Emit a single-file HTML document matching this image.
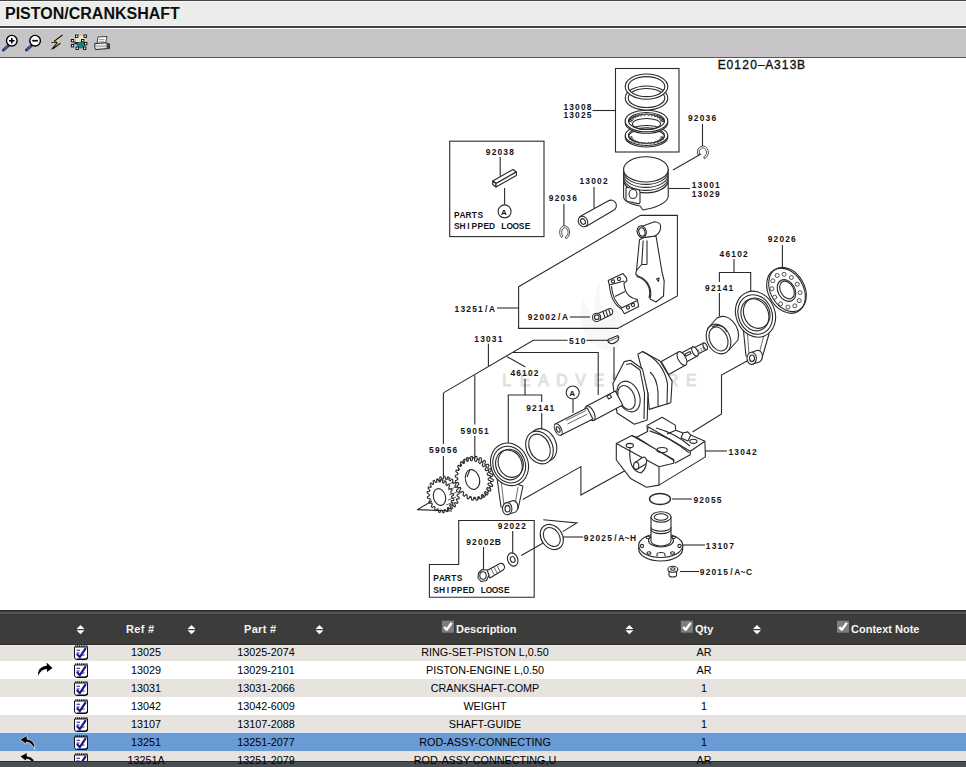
<!DOCTYPE html>
<html><head><meta charset="utf-8">
<style>
*{margin:0;padding:0;box-sizing:border-box}
html,body{width:966px;height:767px;overflow:hidden;background:#fff;font-family:"Liberation Sans",sans-serif}
.abs{position:absolute;left:0;width:966px}
#title{position:absolute;left:5px;top:5px;font-size:16px;font-weight:bold;color:#0d0d0d;white-space:nowrap}
#diag{position:absolute;left:0;top:58px}
.ht{position:absolute;top:623px;color:#f6f6f6;font-weight:bold;font-size:11px;white-space:nowrap}
.c{position:absolute;white-space:nowrap;transform:translateX(-50%);font-size:10.8px;color:#000}
.ico{position:absolute}
</style></head><body>
<!-- header -->
<div class="abs" style="top:0;height:1px;background:#424446"></div>
<div class="abs" style="top:1px;height:1px;background:#f6f6f6"></div>
<div class="abs" style="top:2px;height:23px;background:#ecedeb"></div>
<div class="abs" style="top:25px;height:1px;background:#f3f6f8"></div>
<div class="abs" style="top:26px;height:2px;background:#3f4246"></div>
<div class="abs" style="top:28px;height:1px;background:#ffffff"></div>
<div class="abs" style="top:29px;height:28px;background:#c6c4c7"></div>
<div class="abs" style="top:57px;height:1px;background:#5a585c"></div>
<div id="title">PISTON/CRANKSHAFT</div>
<svg class="ico" style="left:0;top:29px" width="120" height="28" viewBox="0 29 120 28">
 <!-- zoom in -->
 <path d="M3.5,50 L8.5,45.5" stroke="#16305e" stroke-width="3" stroke-linecap="round"/>
 <path d="M4,49.5 L7.5,46.3" stroke="#5b8fcf" stroke-width="1" stroke-linecap="round"/>
 <circle cx="11.8" cy="40.7" r="5.3" fill="#fff" stroke="#000" stroke-width="1.4"/>
 <path d="M9,40.7 H14.6 M11.8,37.9 V43.5" stroke="#000" stroke-width="1.6"/>
 <!-- zoom out -->
 <path d="M26.5,50 L31.5,45.5" stroke="#16305e" stroke-width="3" stroke-linecap="round"/>
 <path d="M27,49.5 L30.5,46.3" stroke="#5b8fcf" stroke-width="1" stroke-linecap="round"/>
 <circle cx="35.1" cy="40.7" r="5.3" fill="#fff" stroke="#000" stroke-width="1.4"/>
 <path d="M32.3,40.7 H37.9" stroke="#000" stroke-width="1.7"/>
 <!-- lightning -->
 <path d="M62.5,35 L51.5,42.5 L56.5,42 L51.5,49.5 L61.5,42 L57,42.5 Z" fill="#f3f09a" stroke="none"/>
 <path d="M62.5,35 L54,41.5 M51.5,42.5 L57,42 M57.5,42.3 L51.5,49.5 M60.5,43 L53,48.8" stroke="#111" stroke-width="1.1" fill="none"/>
 <!-- select -->
 <path d="M73,43 L80,39 L79,46 Z" fill="#1c2f6a"/>
 <rect x="76" y="36" width="9" height="6" fill="#f1e5b5"/>
 <circle cx="81" cy="45" r="3.6" fill="#13837e"/>
 <g fill="#fff" stroke="#000" stroke-width="0.9">
  <rect x="75.5" y="35" width="2.4" height="2.4"/><rect x="84" y="35" width="2.4" height="2.4"/>
  <rect x="71.3" y="39.5" width="2.4" height="2.4"/><rect x="81.5" y="39.5" width="2.4" height="2.4"/>
  <rect x="71.3" y="44.5" width="2.4" height="2.4"/><rect x="84.5" y="42.5" width="2.4" height="2.4"/>
  <rect x="76" y="47" width="2.4" height="2.4"/><rect x="83.5" y="47" width="2.4" height="2.4"/>
 </g>
 <!-- printer -->
 <path d="M98,37 L107,36.5 L105.5,43 L97,43.5 Z" fill="#fff" stroke="#333" stroke-width="0.9"/>
 <path d="M99,39.5 H104.5 M98.8,41.3 H104" stroke="#777" stroke-width="0.7"/>
 <path d="M94.8,43.5 L106,42.8 L109.5,44 L109.5,48.5 L95.5,49.5 L94.8,47.5 Z" fill="#e6e6e6" stroke="#222" stroke-width="1"/>
 <path d="M106.5,43 L109.5,44 L109.5,48.5 L106.5,49 Z" fill="#444"/>
 <path d="M95.5,46.2 H106" stroke="#888" stroke-width="0.8"/>
</svg>

<svg id="diag" width="966" height="552" viewBox="0 58 966 552"><g font-family="Liberation Sans, sans-serif" font-size="15.6" fill="#e0e0e0" stroke="#e0e0e0" stroke-width="0.9" text-anchor="middle">
<text x="506.6 525.1 543.5 562.0 580.4 598.9 617.3 635.8 654.2 672.6 691.1" y="386.2">LEADVENTURE</text>
</g>
<path d="M600,282 Q590,300 597,318 Q585,310 584,298 Q576,318 586,336 Q596,350 612,352 Q626,340 622,320 Q618,306 610,300 Q614,314 606,322 Q598,305 600,282 Z" fill="#f7f7f7"/>
<g fill="none" stroke="#2a2a2a" stroke-width="1.1">
<rect x="615.5" y="68.5" width="63.5" height="83.5"/>
<line x1="592.5" y1="110.5" x2="615.5" y2="110.5"/>
<path fill="#fff" fill-rule="evenodd" d="M625.2,137.0 a21.3,10.0 0 1 0 42.6,0 a21.3,10.0 0 1 0 -42.6,0 Z M628.5,137.0 a18.0,7.8 0 1 0 36.0,0 a18.0,7.8 0 1 0 -36.0,0 Z"/>
<path fill="#fff" fill-rule="evenodd" d="M625.2,135.5 a21.3,10.0 0 1 0 42.6,0 a21.3,10.0 0 1 0 -42.6,0 Z M628.5,135.5 a18.0,7.8 0 1 0 36.0,0 a18.0,7.8 0 1 0 -36.0,0 Z"/>
<polyline fill="none" stroke-width="0.8" points="660.8,136.5 664.5,137.4 660.3,138.0 663.5,139.3 659.1,139.4 661.4,141.0 657.2,140.6 658.5,142.4 654.6,141.6 654.9,143.4 651.6,142.3 650.8,144.1 648.2,142.6 646.5,144.3 644.8,142.6 642.2,144.1 641.4,142.3 638.1,143.4 638.4,141.6 634.5,142.4 635.8,140.6 631.6,141.0 633.9,139.4 629.5,139.3 632.7,138.0 628.5,137.4 632.2,136.5"/>
<path fill="#fff" fill-rule="evenodd" d="M625.2,122.5 a21.3,10.8 0 1 0 42.6,0 a21.3,10.8 0 1 0 -42.6,0 Z M628.5,122.5 a18.0,8.5 0 1 0 36.0,0 a18.0,8.5 0 1 0 -36.0,0 Z"/>
<path fill="#fff" fill-rule="evenodd" d="M625.2,121.0 a21.3,10.8 0 1 0 42.6,0 a21.3,10.8 0 1 0 -42.6,0 Z M628.5,121.0 a18.0,8.5 0 1 0 36.0,0 a18.0,8.5 0 1 0 -36.0,0 Z"/>
<polyline fill="none" stroke-width="0.8" points="632.2,122.0 628.5,121.0 632.7,120.5 629.5,119.1 633.9,119.1 631.6,117.4 635.8,117.8 634.5,116.0 638.4,116.8 638.1,114.9 641.4,116.1 642.2,114.2 644.8,115.7 646.5,113.9 648.2,115.7 650.8,114.2 651.6,116.1 654.9,114.9 654.6,116.8 658.5,116.0 657.2,117.8 661.4,117.4 659.1,119.1 663.5,119.1 660.3,120.5 664.5,121.0 660.8,122.0"/>
<ellipse cx="646.5" cy="124" rx="14" ry="5.5"/>
<path fill="#fff" fill-rule="evenodd" d="M625.2,98.0 a21.3,12.0 0 1 0 42.6,0 a21.3,12.0 0 1 0 -42.6,0 Z M628.2,98.0 a18.3,9.5 0 1 0 36.6,0 a18.3,9.5 0 1 0 -36.6,0 Z"/>
<path fill="#fff" fill-rule="evenodd" d="M625.2,86.6 a21.3,12.6 0 1 0 42.6,0 a21.3,12.6 0 1 0 -42.6,0 Z M628.2,86.6 a18.3,10.0 0 1 0 36.6,0 a18.3,10.0 0 1 0 -36.6,0 Z"/>
</g>
<g fill="none" stroke="#2a2a2a" stroke-width="1.1">
<line x1="702.5" y1="124" x2="702.5" y2="146"/>
<line x1="673" y1="170" x2="701" y2="154"/>
<line x1="500.2" y1="157" x2="500.2" y2="177"/>
<line x1="504.6" y1="188" x2="504.6" y2="204.5"/>
<circle cx="504.6" cy="211.4" r="6.5"/>
<rect x="449.7" y="141.2" width="94.3" height="95.4"/>
<line x1="563.9" y1="204" x2="563.9" y2="227"/>
<line x1="594" y1="187" x2="594" y2="208"/>
<line x1="668" y1="188.5" x2="690" y2="188.5"/>
<polygon points="518.6,286.7 640.5,215.4 677.4,215.4 677.4,296 617.7,328.4 518.6,328.4"/>
<line x1="497" y1="308" x2="518.6" y2="308"/>
<line x1="570" y1="317" x2="590" y2="317"/>
<line x1="782.4" y1="245" x2="782.4" y2="267"/>
<line x1="734" y1="259" x2="734" y2="272.5"/>
<polyline points="719.4,282 719.4,272.5 750.7,272.5 750.7,291"/>
<line x1="719.4" y1="293" x2="719.4" y2="316"/>
<polyline points="747,361 721.5,375 721.5,414 692.5,432"/>
<polyline points="443.4,392.9 533.3,340.3 567.7,340.3"/>
<line x1="586.4" y1="340.3" x2="608" y2="340.3"/>
<line x1="488.4" y1="343.7" x2="488.4" y2="366.7"/>
<polyline points="474.8,375.2 474.8,424.5"/>
<line x1="474.8" y1="436" x2="474.8" y2="459"/>
<line x1="443.4" y1="392.9" x2="443.4" y2="444"/>
<line x1="443.4" y1="456" x2="443.4" y2="476"/>
<line x1="506.7" y1="356.5" x2="525.4" y2="366.9"/>
<polyline points="512.6,352.5 598.2,352.5 598.2,395"/>
<line x1="525" y1="379" x2="525" y2="395"/>
<polyline points="508.3,442.7 508.3,395 541.7,395 541.7,402"/>
<line x1="541.7" y1="413" x2="541.7" y2="430"/>
<line x1="614" y1="347" x2="614" y2="380"/>
<circle cx="572.7" cy="392.5" r="6.5"/>
<line x1="573" y1="399" x2="573" y2="413"/>
<polyline points="522.8,499.6 580.9,466.6 580.9,495 634.4,465.4"/>
<polyline points="543.3,519.7 576.9,523 562.7,531.6"/>
<line x1="521.3" y1="555.4" x2="552.3" y2="537.8"/>
<line x1="562" y1="537" x2="583" y2="537"/>
<line x1="705" y1="451" x2="727" y2="451"/>
<line x1="672" y1="499" x2="692" y2="499"/>
<line x1="683" y1="545" x2="705" y2="545"/>
<line x1="680" y1="571.5" x2="699" y2="571.5"/>
<polygon points="429.4,564.5 429.4,597.3 534.2,597.3 534.2,520.5 458.7,520.5 458.7,564.5"/>
<line x1="512.7" y1="531" x2="512.7" y2="553"/>
<line x1="483.5" y1="547" x2="483.5" y2="570"/>
</g>
<g fill="#fff" stroke="#2a2a2a" stroke-width="1.1" stroke-linejoin="round">
<!-- piston -->
<path d="M623.6,169.5 L623.6,197 Q624,203 640,206 L643,210 L652,208 Q668,203 668.2,196 L668.2,169.5 Z"/>
<ellipse cx="645.9" cy="169.4" rx="22.3" ry="12.6"/>
<path d="M623.8,173 A22.2,12.6 0 0 0 668,173" fill="none"/>
<path d="M623.8,176 A22.2,12.6 0 0 0 668,176" fill="none"/>
<path d="M623.8,179 A22.2,12.6 0 0 0 668,179" fill="none"/>
<path d="M624,182 A22.2,12.6 0 0 0 668,182" fill="none"/>
<rect x="626" y="187" width="14" height="14" rx="2" transform="skewY(12) translate(0,-133)"/>
<ellipse cx="633" cy="194" rx="4" ry="4.5" fill="none"/>
<!-- circlips -->
<path d="M697.7,154.6 A5.5,6.5 0 1 1 704.3,158.7 L703.8,156.7 A3.5,4.5 0 1 0 699.6,153.9 Z" stroke-width="0.8"/>
<path d="M561.5,237.5 A5,6.6 0 1 1 566,238.7 L565.5,236.8 A3.2,4.6 0 1 0 562.8,235.8 Z" stroke-width="0.8"/>
<!-- pin 13002 -->
<path d="M580,216.5 L608,201 A5.2,5.2 0 0 1 614,210 L586,226.5 Z"/>
<ellipse cx="583" cy="221.5" rx="4.5" ry="5.5" transform="rotate(-30 583 221.5)"/>
<ellipse cx="583" cy="221.5" rx="2.2" ry="3" transform="rotate(-30 583 221.5)"/>
<!-- key bar 92038 -->
<polygon points="492.7,181 513,169.5 516.4,172 496,183.5"/>
<polygon points="492.7,181 496,183.5 496,187 492.7,184.5"/>
<polygon points="496,183.5 516.4,172 516.4,175.5 496,187"/>
<!-- con rod upper -->
<path d="M639.5,239.7 L636.5,270.5 L635.7,274.2 L638,276 A18.5,18.5 0 0 1 650,299 L656,302 L663.5,296 L664.2,281 L662,272 L656,236 L644,237.5 Z"/>
<path d="M643.2,240.5 L641.7,264.5 M647,240.5 L647,264.5 M636.5,270.5 L641.7,264.5 L647,264.5" fill="none"/>
<path d="M636.5,276.5 A17,17 0 0 1 649,298" fill="none"/>
<path d="M656.5,279 L659,278 L658.5,281.5 Z" fill="none"/>
<path d="M640.2,227 L654.5,221.7 Q662,222 660.5,229.2 Q659,234.5 654.5,236 L644,237.5 Z"/>
<ellipse cx="641.7" cy="231.8" rx="4.5" ry="6" transform="rotate(-15 641.7 231.8)"/>
<ellipse cx="641.9" cy="232" rx="3" ry="4.3" transform="rotate(-15 641.9 232)" fill="none"/>
<!-- cap -->
<path d="M608.2,280.4 L623,273.6 L626.5,277.9 L626.9,280.8 L624,283 Q624.5,297 637.3,299.4 L638.7,306.6 L624.4,313.8 L621.5,309 Q611,303 609.3,285 Z"/>
<path d="M609.3,285 L624,281 M611.5,286 Q612.5,301 622,308 M621.5,308 L637.3,300.5 M615,296.6 L625,291.5" fill="none"/>
<circle cx="613" cy="281.5" r="1.6" fill="none"/><circle cx="619" cy="279" r="1.6" fill="none"/>
<circle cx="628" cy="307.5" r="1.6" fill="none"/><circle cx="633" cy="305" r="1.6" fill="none"/>
<!-- bolt 92002/A -->
<path d="M598,313.5 L609,308.8 A2.8,3.3 0 0 1 612,314.2 L600.5,320 Z"/>
<path d="M603,311.5 L605,317.5 M605.8,310.3 L607.8,316.3 M608.6,309.1 L610.5,315" fill="none"/>
<circle cx="596.6" cy="317.4" r="4.1"/>
<circle cx="596.8" cy="317.2" r="2.3" fill="none"/>
<!-- key 510 -->
<path d="M608.2,339.6 L617.9,335.6 Q620,339 616.6,341.5 Q613,344.5 610,343.2 Q607.3,341.8 608.2,339.6 Z"/>
<path d="M608.8,341.3 L618.6,337.2" fill="none" stroke-width="0.8"/>
<!-- thrust washer 92026 -->
<ellipse cx="786" cy="290.7" rx="17.5" ry="24" transform="rotate(-30 786 290.7)"/>
<ellipse cx="787.5" cy="289.5" rx="17" ry="23.5" transform="rotate(-30 787.5 289.5)" fill="none"/>
<ellipse cx="786.5" cy="290.5" rx="8.5" ry="11.5" transform="rotate(-30 786.5 290.5)"/>
<ellipse cx="787" cy="290" rx="6.5" ry="9.5" transform="rotate(-30 787 290)" fill="none"/>
<circle cx="797.3" cy="284.2" r="2" stroke-width="0.8"/>
<circle cx="800.1" cy="292.6" r="2" stroke-width="0.8"/>
<circle cx="799.2" cy="300.6" r="2" stroke-width="0.8"/>
<circle cx="794.8" cy="305.9" r="2" stroke-width="0.8"/>
<circle cx="787.9" cy="307.1" r="2" stroke-width="0.8"/>
<circle cx="780.6" cy="303.9" r="2" stroke-width="0.8"/>
<circle cx="774.7" cy="297.2" r="2" stroke-width="0.8"/>
<circle cx="771.9" cy="288.8" r="2" stroke-width="0.8"/>
<circle cx="772.8" cy="280.8" r="2" stroke-width="0.8"/>
<circle cx="777.2" cy="275.5" r="2" stroke-width="0.8"/>
<circle cx="784.1" cy="274.3" r="2" stroke-width="0.8"/>
<circle cx="791.4" cy="277.5" r="2" stroke-width="0.8"/>
<!-- bearing right 92141 -->
<path d="M717,318 A12.5,16.5 -25 0 1 738,340 L729,350 A12.5,16.5 -25 0 1 708,328 Z"/>
<ellipse cx="718.5" cy="339" rx="11.5" ry="15.5" transform="rotate(-25 718.5 339)"/>
<ellipse cx="718.5" cy="339" rx="8.8" ry="12.5" transform="rotate(-25 718.5 339)" fill="none"/>
<path d="M712,327 Q722,322 727,332" fill="none"/>
<!-- con rod right -->
<polygon points="743.0,326.0 746.0,356.0 762.0,358.0 769.0,334.0"/>
<path d="M747.0,328.0 L749.0,354.0 M764.0,335.0 L759.0,354.0" fill="none" stroke-width="0.7"/>
<ellipse cx="755.5" cy="314.2" rx="19.5" ry="23.5" transform="rotate(-22.0 755.5 314.2)"/>
<ellipse cx="755.2" cy="314.5" rx="16.8" ry="20.2" transform="rotate(-22.0 755.2 314.5)" fill="none"/>
<ellipse cx="754.9" cy="314.8" rx="13.6" ry="16.4" transform="rotate(-22.0 754.9 314.8)"/>
<ellipse cx="756.7" cy="313.2" rx="12.9" ry="15.5" transform="rotate(-22.0 756.7 313.2)" fill="none"/>
<path d="M751.7,352.2 L757.7,350.2 A4.7,6.1 0 0 1 757.7,362.4 L751.7,364.4 Z"/>
<ellipse cx="751.7" cy="358.3" rx="4.7" ry="6.1"/>
<ellipse cx="752.0" cy="358.3" rx="2.5" ry="3.3"/>

</g>
<g fill="#fff" stroke="#2a2a2a" stroke-width="1.1" stroke-linejoin="round">
<!-- crankshaft right shaft -->
<polygon points="696.7,354.7 706.9,349.4 703.5,343.0 693.3,348.3"/>
<ellipse cx="705.2" cy="346.2" rx="1.8" ry="3.6" transform="rotate(-27.5 705.2 346.2)"/>
<polygon points="684.4,362.9 697.4,355.9 692.6,347.1 679.6,354.1"/>
<ellipse cx="695.0" cy="351.5" rx="2.5" ry="5.0" transform="rotate(-28.3 695.0 351.5)"/>
<path d="M698,349.5 l1.5,3 M700.5,348.2 l1.5,3 M702.8,347 l1.5,3" fill="none" stroke-width="0.7"/>
<path d="M685,354 L690,351.5 L691,353.5 L686,356 Z" fill="none"/>
<polygon points="668.7,374.5 685.7,365.0 678.3,352.0 661.3,361.5"/>
<ellipse cx="682.0" cy="358.5" rx="3.8" ry="7.5" transform="rotate(-29.2 682.0 358.5)"/>
<!-- rear web -->
<path d="M637.8,354.2 L642.5,351.5 L660,361 L672.1,381.1 L670.8,402.7 L649.2,409.4 L647.9,393.3 Z"/>
<path d="M642.5,351.5 Q664,362 667.5,384 L667,404.5" fill="none"/>
<path d="M650,372 Q657,378 658,392 L658,406" fill="none"/>
<!-- front web -->
<path d="M612.9,383.8 L624.3,361.6 L630.4,360.3 L642.5,369 L647.9,393.3 L647.2,420 L634.4,424.2 L617,413 Z"/>
<path d="M626,364.5 L631,363.5 L640,370 L644.5,393 L644,419" fill="none"/>
<!-- journal boss -->
<ellipse cx="628.5" cy="396.5" rx="10.8" ry="16" transform="rotate(-22 628.5 396.5)"/>
<ellipse cx="626.5" cy="397.5" rx="8" ry="12.5" transform="rotate(-22 626.5 397.5)" fill="none"/>
<polygon points="615.3,390.9 586.3,406.2 593.7,420.4 622.7,405.1"/>
<ellipse cx="590.0" cy="413.3" rx="4.0" ry="8.0" transform="rotate(152.2 590.0 413.3)"/>
<path d="M607,396 L610,394.5 L611.5,397.5 L608.5,399 Z" fill="none"/>
<polygon points="587.1,407.7 555.3,423.9 561.1,435.1 592.9,418.9"/>
<ellipse cx="558.2" cy="429.5" rx="3.1" ry="6.3" transform="rotate(153.0 558.2 429.5)"/>
<ellipse cx="558.2" cy="429.5" rx="1.5" ry="3.0" transform="rotate(153.0 558.2 429.5)" fill="none"/>
<path d="M566,420.5 L586,410.5 M567.5,424 L587.5,414" fill="none" stroke-width="0.7"/>

<!-- block 13042 -->
<path d="M616.3,443.4 L631.9,435.5 L636.6,437.3 L647.5,431.4 L647,425.6 L662.1,417.3 L675.2,425.1 L675.7,430.3 L683,433 L687.7,431.9 L690.8,435 L704.9,441.3 L705.4,456.9 L659,485.1 L646.5,487.2 L630.9,478.8 L616.3,460 Z"/>
<path d="M616.3,443.4 L659,466.8 L659,485.1 M631.9,435.5 L673.6,459.5 L673.6,463.2 L659,466.8 M648.1,426.7 L690.3,451.2 L704.9,441.3 M690.3,451.2 L690.3,454.8 L674.7,463.2 M636.6,437.3 L674.7,461.1 M647.5,431.4 L648.1,426.7 M675.7,430.3 L667,434 M683,433 L681,438 L688,441 L690.8,435" fill="none"/>
<path d="M649.6,430.9 Q670,437 689.2,452.8 M656,428 Q675,433 690,446" fill="none"/>
<ellipse cx="629.8" cy="445.5" rx="3.6" ry="2.1"/>
<ellipse cx="693.4" cy="441.3" rx="3.6" ry="2.1"/>
<ellipse cx="662.1" cy="450.1" rx="5.2" ry="2.6" fill="none"/>
<path d="M630,448 Q628,470 641,473 Q647,468 646,462" fill="none"/>
<path d="M635,462.5 L642.5,457.5 A2.6,3.6 0 0 1 645,464.5 L637.5,469 Z"/>
<ellipse cx="636.2" cy="465.8" rx="2.6" ry="3.6"/>

<!-- o-ring -->
<ellipse cx="660" cy="499" rx="10.5" ry="5.5" fill="none" stroke-width="1.4"/>
<!-- shaft guide 13107 -->
<path d="M638.7,545.5 L638.7,549 A22,12 0 0 0 682.7,549 L682.7,545.5 Z"/>
<ellipse cx="660.7" cy="545.5" rx="22" ry="12"/>
<circle cx="642" cy="546" r="1.6" fill="none"/><circle cx="679.5" cy="546" r="1.6" fill="none"/>
<ellipse cx="649" cy="553" rx="2" ry="1.3" fill="none"/><ellipse cx="672.5" cy="553" rx="2" ry="1.3" fill="none"/>
<ellipse cx="648" cy="537.5" rx="1.8" ry="1.2" fill="none"/><ellipse cx="673.5" cy="537.5" rx="1.8" ry="1.2" fill="none"/>
<path d="M657,556.5 L657,554.5 A4,2 0 0 1 665,554.5 L665,556.5" fill="none"/>
<ellipse cx="661" cy="540.5" rx="12.5" ry="6.5"/>
<path d="M651,517 L651,541 A10,5 0 0 0 671,541 L671,517 Z"/>
<ellipse cx="661" cy="517" rx="10" ry="5.2"/>
<ellipse cx="661" cy="517" rx="6.8" ry="3.3"/>
<path d="M651,527.2 A10,4 0 0 0 671,527.2 M651,529.6 A10,4 0 0 0 671,529.6" fill="none"/>
<!-- plug 92015 -->
<path d="M669,570 L669,575 A3.8,2 0 0 0 676.6,575 L676.6,570 Z"/>
<ellipse cx="672.8" cy="569.3" rx="5" ry="3"/>
<ellipse cx="672.8" cy="569" rx="2.2" ry="1.3" fill="none"/>
<!-- bearing left 92141 -->
<ellipse cx="543" cy="445" rx="13" ry="17" transform="rotate(-25 543 445)"/>
<ellipse cx="539.5" cy="447.5" rx="13" ry="17" transform="rotate(-25 539.5 447.5)"/>
<ellipse cx="539.5" cy="447.5" rx="10" ry="14" transform="rotate(-25 539.5 447.5)"/>
<!-- con rod left -->
<polygon points="497.0,478.0 501.0,507.0 518.0,509.0 523.0,486.0"/>
<path d="M501.0,480.0 L504.0,505.0 M518.0,487.0 L515.0,505.0" fill="none" stroke-width="0.7"/>
<ellipse cx="509.5" cy="464.3" rx="18.6" ry="21.7" transform="rotate(-22.0 509.5 464.3)"/>
<ellipse cx="509.2" cy="464.6" rx="16.0" ry="18.7" transform="rotate(-22.0 509.2 464.6)" fill="none"/>
<ellipse cx="508.9" cy="464.9" rx="13.0" ry="15.2" transform="rotate(-22.0 508.9 464.9)"/>
<ellipse cx="510.7" cy="463.3" rx="12.3" ry="14.3" transform="rotate(-22.0 510.7 463.3)" fill="none"/>
<path d="M507.2,502.6 L513.2,500.6 A4.7,6.1 0 0 1 513.2,512.8 L507.2,514.8 Z"/>
<ellipse cx="507.2" cy="508.7" rx="4.7" ry="6.1"/>
<ellipse cx="507.5" cy="508.7" rx="2.5" ry="3.3"/>

<!-- gear 59051 -->
<polygon points="490.0,473.6 492.7,474.1 493.0,475.7 490.7,476.9 490.8,478.4 493.3,479.6 493.2,481.3 490.7,481.7 490.5,483.1 492.7,485.0 492.3,486.5 489.7,486.1 489.2,487.4 490.9,489.9 490.2,491.2 487.7,490.0 486.9,491.0 488.1,493.9 487.1,495.0 484.9,493.0 483.9,493.7 484.5,496.9 483.2,497.5 481.4,495.0 480.3,495.4 480.2,498.5 478.8,498.7 477.6,495.8 476.4,495.8 475.6,498.7 474.2,498.4 473.6,495.3 472.4,494.9 471.0,497.4 469.6,496.7 469.7,493.6 468.6,492.9 466.7,494.8 465.5,493.7 466.2,490.8 465.3,489.8 463.0,491.0 462.0,489.6 463.4,487.1 462.7,485.9 460.1,486.2 459.5,484.7 461.4,482.8 461.0,481.4 458.3,480.9 458.0,479.3 460.3,478.1 460.2,476.6 457.7,475.4 457.8,473.7 460.3,473.3 460.5,471.9 458.3,470.0 458.7,468.5 461.3,468.9 461.8,467.6 460.1,465.1 460.8,463.8 463.3,465.0 464.1,464.0 462.9,461.1 463.9,460.0 466.1,462.0 467.1,461.3 466.5,458.1 467.8,457.5 469.6,460.0 470.7,459.6 470.8,456.5 472.2,456.3 473.4,459.2 474.6,459.2 475.4,456.3 476.8,456.6 477.4,459.7 478.6,460.1 480.0,457.6 481.4,458.3 481.3,461.4 482.4,462.1 484.3,460.2 485.5,461.3 484.8,464.2 485.7,465.2 488.0,464.0 489.0,465.4 487.6,467.9 488.3,469.1 490.9,468.8 491.5,470.3 489.6,472.2"/>
<polygon points="487.5,475.1 490.2,475.6 490.5,477.2 488.2,478.4 488.3,479.9 490.8,481.1 490.7,482.8 488.2,483.2 488.0,484.6 490.2,486.5 489.8,488.0 487.2,487.6 486.7,488.9 488.4,491.4 487.7,492.7 485.2,491.5 484.4,492.5 485.6,495.4 484.6,496.5 482.4,494.5 481.4,495.2 482.0,498.4 480.7,499.0 478.9,496.5 477.8,496.9 477.7,500.0 476.3,500.2 475.1,497.3 473.9,497.3 473.1,500.2 471.7,499.9 471.1,496.8 469.9,496.4 468.5,498.9 467.1,498.2 467.2,495.1 466.1,494.4 464.2,496.3 463.0,495.2 463.7,492.3 462.8,491.3 460.5,492.5 459.5,491.1 460.9,488.6 460.2,487.4 457.6,487.7 457.0,486.2 458.9,484.3 458.5,482.9 455.8,482.4 455.5,480.8 457.8,479.6 457.7,478.1 455.2,476.9 455.3,475.2 457.8,474.8 458.0,473.4 455.8,471.5 456.2,470.0 458.8,470.4 459.3,469.1 457.6,466.6 458.3,465.3 460.8,466.5 461.6,465.5 460.4,462.6 461.4,461.5 463.6,463.5 464.6,462.8 464.0,459.6 465.3,459.0 467.1,461.5 468.2,461.1 468.3,458.0 469.7,457.8 470.9,460.7 472.1,460.7 472.9,457.8 474.3,458.1 474.9,461.2 476.1,461.6 477.5,459.1 478.9,459.8 478.8,462.9 479.9,463.6 481.8,461.7 483.0,462.8 482.3,465.7 483.2,466.7 485.5,465.5 486.5,466.9 485.1,469.4 485.8,470.6 488.4,470.3 489.0,471.8 487.1,473.7"/>
<ellipse cx="472.5" cy="479.5" rx="7" ry="10" transform="rotate(-15 472.5 479.5)"/>
<path d="M467,477 L470,469.5" fill="none"/>
<!-- gear 59056 -->
<polygon points="456.8,491.5 459.1,492.2 459.3,493.8 457.2,494.6 457.1,495.9 459.2,497.5 459.0,499.0 456.7,498.8 456.4,500.0 458.0,502.2 457.4,503.5 455.2,502.5 454.6,503.4 455.6,506.1 454.7,507.0 452.8,505.2 451.9,505.8 452.3,508.7 451.2,509.2 449.7,506.8 448.7,507.0 448.4,509.7 447.1,509.7 446.3,507.0 445.2,506.8 444.2,509.2 443.0,508.7 442.8,505.8 441.8,505.2 440.2,507.0 439.1,506.1 439.6,503.4 438.8,502.5 436.8,503.5 435.9,502.2 437.1,500.0 436.5,498.8 434.3,498.9 433.7,497.4 435.5,495.8 435.2,494.5 432.9,493.8 432.7,492.2 434.8,491.4 434.9,490.1 432.8,488.5 433.0,487.0 435.3,487.2 435.6,486.0 434.0,483.8 434.6,482.5 436.8,483.5 437.4,482.6 436.4,479.9 437.3,479.0 439.2,480.8 440.1,480.2 439.7,477.3 440.8,476.8 442.3,479.2 443.3,479.0 443.6,476.3 444.9,476.3 445.7,479.0 446.8,479.2 447.8,476.8 449.0,477.3 449.2,480.2 450.2,480.8 451.8,479.0 452.9,479.9 452.4,482.6 453.2,483.5 455.2,482.5 456.1,483.8 454.9,486.0 455.5,487.2 457.7,487.1 458.3,488.6 456.5,490.2"/>
<polygon points="451.0,493.2 453.3,493.7 453.6,495.2 451.6,496.3 451.7,497.6 453.8,498.9 453.7,500.5 451.5,500.6 451.2,501.8 453.0,503.9 452.5,505.2 450.2,504.5 449.7,505.5 450.9,508.1 450.1,509.1 448.1,507.5 447.3,508.2 447.9,511.1 446.8,511.7 445.2,509.5 444.2,509.8 444.1,512.6 442.9,512.7 441.8,510.1 440.8,510.0 440.0,512.5 438.7,512.2 438.3,509.3 437.3,508.8 435.9,510.8 434.7,510.0 435.0,507.2 434.1,506.4 432.3,507.6 431.3,506.5 432.3,504.1 431.6,503.0 429.4,503.3 428.8,501.9 430.3,500.1 430.0,498.8 427.7,498.3 427.4,496.8 429.4,495.7 429.3,494.4 427.2,493.1 427.3,491.5 429.5,491.4 429.8,490.2 428.0,488.1 428.5,486.8 430.8,487.5 431.3,486.5 430.1,483.9 430.9,482.9 432.9,484.5 433.7,483.8 433.1,480.9 434.2,480.3 435.8,482.5 436.8,482.2 436.9,479.4 438.1,479.3 439.2,481.9 440.2,482.0 441.0,479.5 442.3,479.8 442.7,482.7 443.7,483.2 445.1,481.2 446.3,482.0 446.0,484.8 446.9,485.6 448.7,484.4 449.7,485.5 448.7,487.9 449.4,489.0 451.6,488.7 452.2,490.1 450.7,491.9"/>
<ellipse cx="439.5" cy="497" rx="6" ry="8.5" transform="rotate(-15 439.5 497)"/>
<path d="M443,481 L451,478 M446,485 L454,482 M448,490 L456,487 M449,495 L457,492 M448,500 L456,497 M446,505 L454,502" fill="none" stroke-width="0.7"/>

<polyline points="452,511 417.4,509.6 432,501" fill="none"/>
<!-- washer 92022 -->
<ellipse cx="512.7" cy="559.5" rx="5" ry="6.8" transform="rotate(-20 512.7 559.5)"/>
<ellipse cx="512.7" cy="559.5" rx="2.3" ry="3" transform="rotate(-20 512.7 559.5)"/>
<!-- bolt 92002B -->
<path d="M486,571 L499,564 A3.3,3.6 0 0 1 503,570 L490,578 Z"/>
<path d="M491,568.5 L494,574.5 M494,567 L497,573 M497,565.5 L500,571.3" fill="none" stroke-width="0.7"/>
<path d="M478.5,573 L482,569.5 L487,570 L489,575 L486.5,580.5 L481,581.5 L478,578 Z"/>
<ellipse cx="483" cy="575.5" rx="3.2" ry="3.8" fill="none"/>
<!-- washer 92025 -->
<ellipse cx="551.8" cy="537" rx="10.5" ry="13.5" transform="rotate(-35 551.8 537)"/>
<ellipse cx="551.8" cy="537" rx="7.5" ry="10.3" transform="rotate(-35 551.8 537)"/>
</g>
<g font-family="Liberation Sans, sans-serif" font-weight="bold" fill="#141414" text-anchor="middle">
<text x="565.72 571.57 577.42 583.27 589.12" y="109.6" font-size="8.4">13008</text>
<text x="565.72 571.57 577.42 583.27 589.12" y="117.9" font-size="8.4">13025</text>
<text x="690.32 696.17 702.02 707.87 713.72" y="121.3" font-size="8.4">92036</text>
<text x="488.12 493.97 499.82 505.67 511.52" y="154.7" font-size="8.4">92038</text>
<text x="581.82 587.67 593.52 599.37 605.22" y="184.1" font-size="8.4">13002</text>
<text x="551.12 556.97 562.82 568.67 574.52" y="200.9" font-size="8.4">92036</text>
<text x="694.02 699.87 705.72 711.57 717.42" y="187.9" font-size="8.4">13001</text>
<text x="694.02 699.87 705.72 711.57 717.42" y="196.6" font-size="8.4">13029</text>
<text x="456.72 462.62 468.52 474.42 480.32" y="217.7" font-size="8.4">PARTS</text>
<text x="456.72 462.62 468.52 474.42 480.32 486.22 492.12 503.92 509.82 515.72 521.62 527.52" y="229.4" font-size="8.4">SHIPPEDLOOSE</text>
<text x="770.02 775.87 781.72 787.57 793.42" y="241.9" font-size="8.4">92026</text>
<text x="721.92 727.77 733.62 739.47 745.32" y="256.8" font-size="8.4">46102</text>
<text x="707.42 713.27 719.12 724.97 730.82" y="291.4" font-size="8.4">92141</text>
<text x="456.92 462.77 468.62 474.47 480.32 486.17 492.02" y="311.8" font-size="8.4">13251/A</text>
<text x="530.02 535.87 541.72 547.57 553.42 559.27 565.12" y="320.0" font-size="8.4">92002/A</text>
<text x="476.62 482.47 488.32 494.17 500.02" y="341.5" font-size="8.4">13031</text>
<text x="571.42 577.27 583.12" y="344.1" font-size="8.4">510</text>
<text x="512.72 518.57 524.42 530.27 536.12" y="375.6" font-size="8.4">46102</text>
<text x="528.52 534.37 540.22 546.07 551.92" y="411.3" font-size="8.4">92141</text>
<text x="462.92 468.77 474.62 480.47 486.32" y="433.6" font-size="8.4">59051</text>
<text x="431.42 437.27 443.12 448.97 454.82" y="453.2" font-size="8.4">59056</text>
<text x="730.82 736.67 742.52 748.37 754.22" y="454.6" font-size="8.4">13042</text>
<text x="695.72 701.57 707.42 713.27 719.12" y="502.9" font-size="8.4">92055</text>
<text x="500.12 505.97 511.82 517.67 523.52" y="529.1" font-size="8.4">92022</text>
<text x="468.52 474.37 480.22 486.07 491.92 497.77" y="545.1" font-size="8.4">92002B</text>
<text x="708.12 713.97 719.82 725.67 731.52" y="548.7" font-size="8.4">13107</text>
<text x="586.12 591.97 597.82 603.67 609.52 615.37 621.22 627.07 632.92" y="540.5" font-size="8.4">92025/A~H</text>
<text x="436.02 441.92 447.82 453.72 459.62" y="580.9" font-size="8.4">PARTS</text>
<text x="436.02 441.92 447.82 453.72 459.62 465.52 471.42 483.22 489.12 495.02 500.92 506.82" y="593.1" font-size="8.4">SHIPPEDLOOSE</text>
<text x="702.12 707.97 713.82 719.67 725.52 731.37 737.22 743.07 748.92" y="575.4" font-size="8.4">92015/A~C</text>
<text x="504.00" y="214.6" font-size="8.0">A</text>
<text x="572.10" y="395.7" font-size="8.0">A</text>
</g>
<text x="721.80 729.72 737.64 745.56 753.48 761.40 769.32 777.24 785.16 793.08 801.00" y="69" font-family="Liberation Sans, sans-serif" font-size="12" fill="#111" stroke="#111" stroke-width="0.35" text-anchor="middle">E0120–A313B</text>
</svg>
<!-- table header -->
<div class="abs" style="top:610px;height:1px;background:#2a2b2e"></div>
<div class="abs" style="top:611px;height:1px;background:#3a3b3e"></div>
<div class="abs" style="top:612px;height:2px;background:#515256"></div>
<div class="abs" style="top:614px;height:1px;background:#38393b"></div>
<div class="abs" style="top:615px;height:29px;background:#3c3d3b"></div>
<div class="abs" style="top:644px;height:1px;background:#2f2f2c"></div>
<span class="ht" style="left:126px;letter-spacing:0.3px">Ref #</span>
<span class="ht" style="left:244px;letter-spacing:0.3px">Part #</span>
<span class="ht" style="left:456px">Description</span>
<span class="ht" style="left:695px">Qty</span>
<span class="ht" style="left:851px">Context Note</span>
<svg class="ico" style="left:0;top:615px" width="966" height="30" viewBox="0 615 966 30">
<path d="M76.5,629 L84.5,629 L80.5,625 Z M76.5,630.2 L84.5,630.2 L80.5,634.2 Z" fill="#fff"/>
<path d="M187.5,629 L195.5,629 L191.5,625 Z M187.5,630.2 L195.5,630.2 L191.5,634.2 Z" fill="#fff"/>
<path d="M315.5,629 L323.5,629 L319.5,625 Z M315.5,630.2 L323.5,630.2 L319.5,634.2 Z" fill="#fff"/>
<path d="M625.4,629 L633.4,629 L629.4,625 Z M625.4,630.2 L633.4,630.2 L629.4,634.2 Z" fill="#fff"/>
<path d="M753.0,629 L761.0,629 L757.0,625 Z M753.0,630.2 L761.0,630.2 L757.0,634.2 Z" fill="#fff"/>
<rect x="441.9" y="620.7" width="12" height="12" fill="#7d7d7d"/>
<path d="M444.2,627.0 L446.7,629.7 L451.7,622.9" stroke="#fff" stroke-width="2.4" fill="none" stroke-linejoin="round"/>
<rect x="680.9" y="620.7" width="12" height="12" fill="#7d7d7d"/>
<path d="M683.2,627.0 L685.7,629.7 L690.7,622.9" stroke="#fff" stroke-width="2.4" fill="none" stroke-linejoin="round"/>
<rect x="837.0" y="620.7" width="12" height="12" fill="#7d7d7d"/>
<path d="M839.3,627.0 L841.8,629.7 L846.8,622.9" stroke="#fff" stroke-width="2.4" fill="none" stroke-linejoin="round"/>
</svg>

<!-- rows -->
<div class="abs" style="top:645px;height:1px;background:#efede9"></div>
<div class="abs" style="top:646px;height:15px;background:#e7e4e0"></div>
<div class="abs" style="top:661px;height:18px;background:#ffffff"></div>
<div class="abs" style="top:679px;height:18px;background:#e7e4e0"></div>
<div class="abs" style="top:697px;height:18px;background:#ffffff"></div>
<div class="abs" style="top:715px;height:17px;background:#e7e4e0"></div>
<div class="abs" style="top:732px;height:1px;background:#dae8f9"></div>
<div class="abs" style="top:733px;height:18px;background:#6a9bd5"></div>
<div class="abs" style="top:751px;height:1px;background:#d6e4f1"></div>
<div class="abs" style="top:752px;height:9px;background:#e7e4e0"></div>
<div class="abs" style="top:761px;height:1px;background:#2d2e2c"></div>
<div class="abs" style="top:762px;height:5px;background:#4a4d52"></div>
<span class="c" style="left:146px;top:646.0px">13025</span>
<span class="c" style="left:266px;top:646.0px">13025-2074</span>
<span class="c" style="left:485px;top:646.0px">RING-SET-PISTON L,0.50</span>
<span class="c" style="left:704px;top:646.0px">AR</span>
<span class="c" style="left:146px;top:664.0px">13029</span>
<span class="c" style="left:266px;top:664.0px">13029-2101</span>
<span class="c" style="left:485px;top:664.0px">PISTON-ENGINE L,0.50</span>
<span class="c" style="left:704px;top:664.0px">AR</span>
<span class="c" style="left:146px;top:682.0px">13031</span>
<span class="c" style="left:266px;top:682.0px">13031-2066</span>
<span class="c" style="left:485px;top:682.0px">CRANKSHAFT-COMP</span>
<span class="c" style="left:704px;top:682.0px">1</span>
<span class="c" style="left:146px;top:700.0px">13042</span>
<span class="c" style="left:266px;top:700.0px">13042-6009</span>
<span class="c" style="left:485px;top:700.0px">WEIGHT</span>
<span class="c" style="left:704px;top:700.0px">1</span>
<span class="c" style="left:146px;top:718.0px">13107</span>
<span class="c" style="left:266px;top:718.0px">13107-2088</span>
<span class="c" style="left:485px;top:718.0px">SHAFT-GUIDE</span>
<span class="c" style="left:704px;top:718.0px">1</span>
<span class="c" style="left:146px;top:736.0px">13251</span>
<span class="c" style="left:266px;top:736.0px">13251-2077</span>
<span class="c" style="left:485px;top:736.0px">ROD-ASSY-CONNECTING</span>
<span class="c" style="left:704px;top:736.0px">1</span>
<span class="c" style="left:146px;top:754.0px">13251A</span>
<span class="c" style="left:266px;top:754.0px">13251-2079</span>
<span class="c" style="left:485px;top:754.0px">ROD-ASSY-CONNECTING,U</span>
<span class="c" style="left:704px;top:754.0px">AR</span>

<svg class="ico" style="left:0;top:645px" width="100" height="116" viewBox="0 645 100 116">
<defs><g id="np"><path d="M0.5,2 H13.5 V12 Q13.5,14.5 11,14.5 H3 Q0.5,14.5 0.5,12 Z" fill="#fff" stroke="#111" stroke-width="1"/><path d="M3,14 H11.5 Q13.5,14 13.6,12" stroke="#000" stroke-width="1.2" fill="none"/><rect x="1.2" y="0.3" width="1.2" height="1.5" fill="#111"/><rect x="3.0" y="0.3" width="1.2" height="1.5" fill="#111"/><rect x="4.9" y="0.3" width="1.2" height="1.5" fill="#111"/><rect x="6.8" y="0.3" width="1.2" height="1.5" fill="#111"/><rect x="8.6" y="0.3" width="1.2" height="1.5" fill="#111"/><rect x="10.4" y="0.3" width="1.2" height="1.5" fill="#111"/><rect x="12.3" y="0.3" width="1.2" height="1.5" fill="#111"/><path d="M2.5,5.3 H6 M2.5,8 H5.5" stroke="#1a1a8a" stroke-width="1.1"/><path d="M2.8,9 L5.8,12 L11.8,3.2" stroke="#16168e" stroke-width="2.2" fill="none"/><path d="M8,10 H10.5" stroke="#1a1a8a" stroke-width="1"/></g></defs>
<use href="#np" x="74" y="645"/>
<use href="#np" x="74" y="663"/>
<use href="#np" x="74" y="681"/>
<use href="#np" x="74" y="699"/>
<use href="#np" x="74" y="717"/>
<use href="#np" x="74" y="735"/>
<use href="#np" x="74" y="753"/>
<path d="M38,676 Q37,667 47,665.5 L46.5,662.5 L52.5,668 L47,672 L47,669 Q41,669 38,676 Z" fill="#000"/>
<path d="M34.5,749.5 Q36,740.5 27,739.0 L27,735.5 L20,739.5 L26,744.0 L26.5,742.0 Q32,742.5 34.5,749.5 Z" fill="#000" stroke="#fff" stroke-width="0.6"/>
<path d="M34.5,766.5 Q36,757.5 27,756.0 L27,752.5 L20,756.5 L26,761.0 L26.5,759.0 Q32,759.5 34.5,766.5 Z" fill="#000" stroke="#fff" stroke-width="0.6"/>
</svg>

</body></html>
